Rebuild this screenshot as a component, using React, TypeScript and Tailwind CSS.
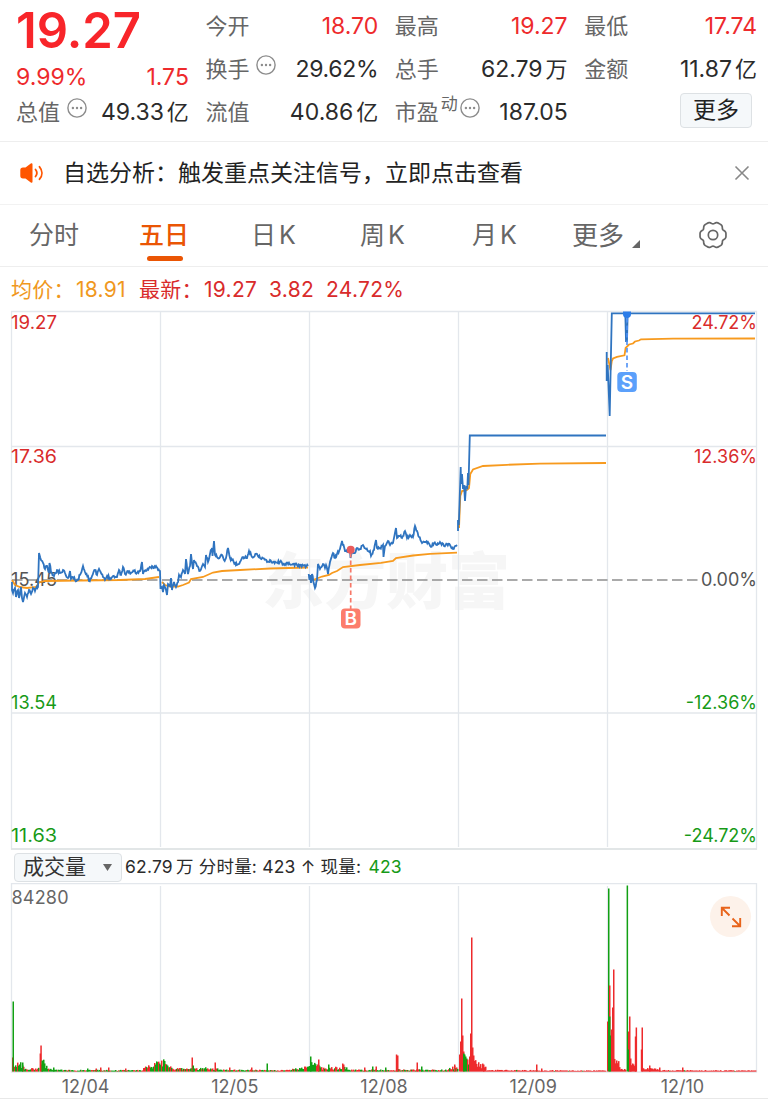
import React from "react";

type Point = [number, number];

const RED = "#ee2a2c";
const GREEN = "#11a013";

const random = (seed: number) => () => {
  seed = (seed * 16807) % 2147483647;
  return seed / 2147483647;
};

const parse = (raw: string): Point[] =>
  raw
    .trim()
    .split(/\s+/)
    .map((p) => p.split(",").map(Number) as Point);

// adds the minute-by-minute jitter between the key prices
const jitter = (points: Point[], amount: number, seed: number) => {
  const next = random(seed);
  const out: Point[] = [];
  points.forEach((p, i) => {
    out.push(p);
    const q = points[i + 1];
    if (!q || q[0] - p[0] < 1.4) return;
    const steps = Math.round((q[0] - p[0]) / 0.8);
    for (let s = 1; s < steps; s++) {
      const t = s / steps;
      out.push([
        p[0] + (q[0] - p[0]) * t,
        p[1] + (q[1] - p[1]) * t + (next() - 0.5) * amount,
      ]);
    }
  });
  return out;
};

const toPoints = (points: Point[]) =>
  points.map(([x, y]) => `${x.toFixed(1)},${y.toFixed(1)}`).join(" ");

const DAY1 =
  "12,582 12,590 13,593 15,588 16,597 18,590 19,598 21,587 22,598 23,602 25,593 27,597 29,590 31,594 33,588 35,591 36,588 38,587 39,553 41,560 43,563 45,569 47,566 49,573 49.5,563 51,572 54,576 57,570 60,573 63,570 65,573 68,578 70,571 71,579 73,577 75,580 78,580 80,575 83,566 85,572 88,576 89,581 92,576 95,570 97,575 99,569 101,573 103,577 105,580 107,576 110,578 113,576 117,577 119,570 121,575 123,567 125,574 128,571 131,573 134,571 137,573 140,571 142,562 143,574 146,571 149,568 152,566 154,568 156,566 158,570 160,571 160.5,588 162,587 163,592 164,585 166,590 167,595 168,584 170,586 171,578 172,590 174,582 176,587 178,582 179,575 181,577 183,570 185,574 186,559 188,574 190,566 191,554 193,569 194,560 197,566 200,571 203,564 205,567 206,555 208,562 210,554 212,548 212.5,556 214,541 215,555 217,557 220,557 222,555 224,560 226,558 228,548 230,558 232,560 235,563 237,565 240,562 243,557 247,558 249,551 252,557 257,554 260,558 263,558 267,562 270,560 273,562 280,562 285,564 297,565 308,566";
const DAY3 =
  "308.7,574 309.5,580 310,575 311,583 312,574 314,584 315,588 317,580 318,564 320,569 323,564 325,568 326,565 328,574 330,562 333,553 335,558 337,554 340,549 342,541 345,551 348,552 350,550 350.5,558 352,551 355,553 357,548 360,549 363,545 366,549 370,551 371,556 374,550 376,540 377,548 380,548 383,545 383.5,557 385,546 388,541 390,545 393,543 396,528 397,538 400,536 402,538 405,531 407,538 410,535 413,537 415,526 417,531 419,537 422,543 425,542 428,542 431,547 434,543 437,545 440,542 444,546 447,544 450,545 453,549 457,545";
const DAY4 =
  "458,531 458,520 458.8,525 460.7,467 461,484 462,474 463,489 464,485 465,501 466,487 467.3,488 468,473 468.5,485 469.8,435.5 606,435.5";
const DAY5 =
  "606.7,352 606.7,381 607.7,365 609.7,416 611.8,313.3 625.3,313.3 626,341 627,341 627.7,313.3 755,313.3";

const AVERAGES = [
  "12,580 15,585 20,587 27,588 36,587 39,582.5 45,581 80,580.5 120,580 145,579 159,577",
  "162,582 165,585 170,586.5 178,586.5 183,585 189,582.5 191,579 203,577 213,572.5 222,571 240,570 270,568.5 308,567.5",
  "309,577 313,580 317,578.5 322,576.5 329,575 332,573 337,571 343,567 360,565 381,562.8 393,561 396,558 413,555.5 430,553.8 457,552.7",
  "459,528 460.3,496 462,491 467,490 469,488 470.3,474 473,469.5 483,466 507,464.8 540,463.7 606,463",
  "608,358 610.5,370 611.8,361 613,358.5 617,356.8 624.5,355.3 625.6,348 629,344.5 633,343.5 635,341.5 639,340.5 641,339.3 673,338.6 755,338.5",
];

const PRICE_LINES = [
  toPoints(jitter(parse(DAY1), 3.2, 11)),
  toPoints(jitter(parse(DAY3), 2.8, 29)),
  toPoints(parse(DAY4)),
  toPoints(parse(DAY5)),
];

type Bar = { x: number; h: number; up: boolean };

// [from, to, start height, end height, share of rising bars]
const CLUSTERS: [number, number, number, number, number][] = [
  [14, 24, 12, 5, 0.3],
  [24, 39, 4, 3, 0.6],
  [41, 47, 17, 4, 0.1],
  [47, 60, 2.5, 1.5, 0.2],
  [60, 143, 1.6, 1.3, 0.4],
  [143, 162, 4, 11, 0.6],
  [162, 172, 11, 3, 0.2],
  [172, 204, 3, 3, 0.45],
  [204, 218, 4, 3, 0.5],
  [218, 290, 1.7, 1.5, 0.45],
  [290, 308, 2, 5, 0.35],
  [308, 320, 9, 6, 0.2],
  [320, 330, 4, 3, 0.5],
  [330, 347, 4, 4, 0.6],
  [347, 395, 1.7, 1.7, 0.4],
  [395, 445, 2, 1.7, 0.4],
  [445, 458, 2, 6, 0.3],
  [474, 486, 12, 4, 1],
  [486, 606, 1.5, 1, 0.95],
  [614, 620, 16, 6, 1],
  [620, 626, 2, 3, 1],
  [630, 636, 10, 3, 1],
  [642, 660, 4, 2, 1],
  [660, 756, 1.3, 1, 0.95],
];

const SPIKES: [number, number, number][] = [
  [12, 14, 1], [12.5, 70, 0], [22, 9, 0], [39.6, 18, 1], [40.3, 26, 1], [41.5, 11, 0],
  [53, 4, 0], [87, 3, 0], [95.500, 3, 1], [100, 4, 1], [108, 4, 1], [125, 3, 1],
  [191.5, 14, 1], [192.5, 6, 0], [214.5, 9, 1], [229, 4, 1], [251, 4, 1],
  [266.5, 8, 0], [310, 15, 0], [318, 12, 1], [328, 7, 0], [342, 8, 1],
  [343, 7, 1], [364, 4, 1], [372, 5, 0], [375.5, 5, 1], [385, 4, 0],
  [395.8, 17, 1], [397, 16, 1], [416.5, 9, 1], [421, 5, 0],
  [454, 7, 1], [459, 17, 1], [460, 30, 1], [461, 73, 1], [462, 36, 1],
  [463, 20, 1], [463, 18, 0], [464, 17, 0], [465, 15, 0], [466, 13, 0],
  [467, 12, 1], [468, 7, 0], [469, 15, 1], [470, 38, 1], [471, 134, 1],
  [472, 24, 1], [473, 16, 1], [483, 7, 1], [536, 7, 1], [541, 3, 1],
  [607, 50, 1], [608, 183, 0], [609, 86, 1], [609, 55, 0], [610, 36, 0],
  [611, 42, 1], [612, 64, 1], [613, 102, 1], [626.600, 186, 0], [628, 40, 1],
  [628, 22, 0], [629, 55, 1], [630, 13, 1], [634.8, 35, 1], [635.6, 44, 1],
  [640.8, 22, 1], [641.5, 44, 1], [649, 6, 1], [659, 4, 1], [682, 4, 1],
];

const volumeBars = (() => {
  const next = random(77);
  const bars: Bar[] = [];
  CLUSTERS.forEach(([from, to, h0, h1, share]) => {
    for (let x = from; x < to; x++) {
      const h = h0 + ((h1 - h0) * (x - from)) / (to - from);
      bars.push({ x, h: Math.max(0.5, h * (0.4 + next() * 0.8)), up: next() < share });
    }
  });
  SPIKES.forEach(([x, h, up]) => bars.push({ x, h, up: up === 1 }));
  return bars;
})();

const GEAR = Array.from({ length: 121 }, (_, i) => {
  const a = (i / 120) * Math.PI * 2;
  const r = 12.4 + 0.9 * Math.cos(6 * a) - 0.35 * Math.cos(12 * a);
  return `${(16 + r * Math.cos(a)).toFixed(2)},${(16 + r * Math.sin(a)).toFixed(2)}`;
}).join(" ");

const MoreDots = () => (
  <svg className="w-5 h-5 shrink-0" viewBox="0 0 20 20" fill="none">
    <circle cx="10" cy="10" r="9.1" stroke="#8c8c8c" strokeWidth="1.4" />
    <circle cx="5.9" cy="10" r="1.2" fill="#8c8c8c" />
    <circle cx="10" cy="10" r="1.2" fill="#8c8c8c" />
    <circle cx="14.1" cy="10" r="1.2" fill="#8c8c8c" />
  </svg>
);

const Stat = ({
  label,
  value,
  unit,
  red,
  sup,
  dots,
}: {
  label: string;
  value: string;
  unit?: string;
  red?: boolean;
  sup?: string;
  dots?: boolean;
}) => (
  <div className="flex h-[43px] items-center justify-between whitespace-nowrap">
    <div className="flex items-center">
      <span className="text-[22px] text-[#666]">{label}</span>
      {sup && <span className="mb-4 ml-0.5 text-[17px] text-[#666]">{sup}</span>}
      {dots && (
        <span className={sup ? "mb-2.5 ml-0.5" : "mb-2.5 ml-[7px]"}>
          <MoreDots />
        </span>
      )}
    </div>
    <div
      className={`-mr-px flex items-center text-[23px] ${red ? "text-[#ee2a2c]" : "text-[#2b2b2b]"}`}
    >
      <span className={value.endsWith("%") ? "tracking-[-0.3px]" : ""}>{value}</span>
      {unit && <span className="ml-[3px] text-[22px]">{unit}</span>}
    </div>
  </div>
);

const Quote = () => (
  <section className="grid h-[142px] grid-cols-4 gap-x-[17.5px] border-b border-[#eee] pt-[5px] pr-3 pl-4">
    <div>
      <div className="flex h-[51px] items-center text-[49px] font-semibold text-[#f8252a]">
        19.27
      </div>
      <div className="-mr-px flex h-[43px] items-center justify-between text-[23px] text-[#ee2a2c]">
        <span>9.99%</span>
        <span>1.75</span>
      </div>
      <div className="-mt-2">
        <Stat label="总值" value="49.33" unit="亿" dots />
      </div>
    </div>
    <div>
      <Stat label="今开" value="18.70" red />
      <Stat label="换手" value="29.62%" dots />
      <Stat label="流值" value="40.86" unit="亿" />
    </div>
    <div>
      <Stat label="最高" value="19.27" red />
      <Stat label="总手" value="62.79" unit="万" />
      <Stat label="市盈" sup="动" value="187.05" dots />
    </div>
    <div>
      <Stat label="最低" value="17.74" red />
      <Stat label="金额" value="11.87" unit="亿" />
      <div className="flex justify-end pt-[2px] pr-1">
        <button className="flex h-[35px] w-[72px] items-center justify-center rounded border border-[#dde1e4] bg-[#f5f8fa] text-[23px] text-[#222]">
          更多
        </button>
      </div>
    </div>
  </section>
);

const Notice = () => (
  <section className="flex h-[63px] items-center border-b border-[#f2f2f2] pr-[18px] pl-5">
    <svg className="h-6 w-6" viewBox="0 0 24 24" fill="none">
      <path
        d="M3 6.500H5.500l5.300-4c.9-.6 1.700-.3 1.700.7v17.600c0 1-.8 1.300-1.700.7l-5.300-4H3C1.200 17.500.3 16.600.3 14.800V9.200C.3 7.400 1.200 6.500 3 6.500z"
        fill="#ff5500"
      />
      <path
        d="M15.500 8.500c1.600 2 1.600 5 0 7M19.500 5.800c3.200 3.700 3.200 8.700 0 12.400"
        stroke="#ff5500"
        strokeWidth="1.8"
        strokeLinecap="round"
      />
    </svg>
    <span className="ml-[19px] flex-1 text-[23px] text-[#222]">
      自选分析：触发重点关注信号，立即点击查看
    </span>
    <svg className="h-4 w-4" viewBox="0 0 16 16" stroke="#888" strokeWidth="1.6">
      <path d="M1.500 1.500l13 13M14.500 1.500l-13 13" />
    </svg>
  </section>
);

const Tabs = () => (
  <nav className="flex h-[62px] border-b border-[#eee] pl-[29px] text-[25px] text-[#666]">
    <span className="w-[110px] pt-3">分时</span>
    <div className="w-[112px] pt-3 text-[#ea5504]">
      <span className="font-medium">五日</span>
      <div className="mt-[1px] ml-2 h-[5px] w-9 rounded-full bg-[#ea5504]" />
    </div>
    <span className="w-[109px] pt-3 [word-spacing:-4px]">日 K</span>
    <span className="w-[112px] pt-3 [word-spacing:-4px]">周 K</span>
    <span className="w-[100px] pt-3 [word-spacing:-4px]">月 K</span>
    <div className="flex w-[125px] pt-3">
      <span className="text-[26px] leading-[37px]">更多</span>
      <svg className="mt-[23px] ml-2 h-2 w-2" viewBox="0 0 8 8">
        <path d="M8 0v8H0z" fill="#666" />
      </svg>
    </div>
    <svg className="mt-3.5 h-8 w-8" viewBox="0 0 32 32" fill="none" stroke="#666">
      <polygon points={GEAR} strokeWidth="1.7" strokeLinejoin="round" />
      <circle cx="16" cy="16" r="4.700" strokeWidth="1.7" />
    </svg>
  </nav>
);

const axisLabels = [
  { y: 329, left: "19.27", right: "24.72%", color: "#d92b2b" },
  { y: 463, left: "17.36", right: "12.36%", color: "#d92b2b" },
  { y: 585.5, left: "15.45", right: "0.00%", color: "#555" },
  { y: 708.5, left: "13.54", right: "-12.36%", color: "#179a17" },
  { y: 842, left: "11.63", right: "-24.72%", color: "#179a17" },
];

const PriceChart = () => (
  <svg className="block h-[545px] w-full" viewBox="0 306 768 545">
    <text
      x="262"
      y="604"
      fontSize="61"
      fontWeight="900"
      fill="#f6f6f6"
      textLength="248"
      lengthAdjust="spacingAndGlyphs"
    >
      东方财富
    </text>
    <g stroke="#e3e7ec" strokeWidth="1.3" fill="none">
      <path d="M11.500 311.500H756.500V849H11.500z" />
      <path d="M11 446.500H757M11 713H757" />
      <path d="M160.500 312V847M309.500 312V847M458.500 312V847M607.500 312V847" />
    </g>
    <path d="M11 849H757" stroke="#dfe3e5" strokeWidth="1.5" />
    <path
      d="M12 580H700"
      stroke="#8e8e8e"
      strokeWidth="1.6"
      strokeDasharray="10.5 4.500"
    />
    {axisLabels.map((l) => (
      <g key={l.left} fill={l.color} fontSize="18">
        <text x="11" y={l.y} textLength="46" lengthAdjust="spacingAndGlyphs">
          {l.left}
        </text>
        <text x="757" y={l.y} textAnchor="end">
          {l.right}
        </text>
      </g>
    ))}
    <g fill="none" stroke="#f79a1e" strokeWidth="1.8">
      {AVERAGES.map((points) => (
        <polyline key={points} points={points} />
      ))}
    </g>
    <g fill="none" stroke="#2f74c0" strokeWidth="1.8">
      {PRICE_LINES.map((points) => (
        <polyline key={points} points={points} />
      ))}
    </g>

    <path d="M350.700 553V609" stroke="#f77869" strokeWidth="1.7" strokeDasharray="4.500 3" />
    <circle cx="350.700" cy="549.800" r="4" fill="#ea5b5b" />
    <rect x="341" y="608.500" width="19.500" height="20" rx="4" fill="#fc7d6c" />
    <text x="350.700" y="625" textAnchor="middle" fontSize="19" fontWeight="600" fill="#fff">
      B
    </text>

    <path d="M627 318V371" stroke="#4e90f5" strokeWidth="1.6" strokeDasharray="4.500 3" />
    <path d="M623 311.500h8v2.500a4 4 0 0 1-8 0z" fill="#2b7de9" />
    <rect x="617.300" y="372" width="19.500" height="20" rx="4" fill="#5ba0fb" />
    <text x="627" y="388.700" textAnchor="middle" fontSize="19" fontWeight="600" fill="#fff">
      S
    </text>
  </svg>
);

const VolumeBar = () => (
  <div className="flex h-[32px] items-center pl-3.5 text-[17.500px] whitespace-pre text-[#2b2b2b]">
    <button className="flex h-[29px] w-[108px] items-center justify-between rounded border border-[#dde1e4] bg-[#f5f8fa] pr-[9px] pl-2 text-[21px] text-[#333]">
      成交量
      <svg className="h-[7px] w-[9px]" viewBox="0 0 9 7">
        <path d="M0 0h9L4.500 7z" fill="#666" />
      </svg>
    </button>
    <span className="ml-[3px] tracking-[0.2px]">62.79</span>
    <span className="ml-[3px] tracking-[0.2px]">万 分时量: 423 ↑ 现量: </span>
    <span className="ml-0.5 tracking-[0.2px] text-[#179a17]">423</span>
  </div>
);

const VolumeChart = () => (
  <div className="relative">
    <svg className="block h-[191px] w-full" viewBox="0 883 768 191">
      <g stroke="#e3e7ec" strokeWidth="1.3" fill="none">
        <path d="M11.500 883.700H756.500V1072H11.500z" />
        <path d="M160.500 886V1071M309.500 886V1071M458.500 886V1071M607.500 886V1071" />
      </g>
      <text x="11.500" y="903.500" fontSize="18" fill="#666" textLength="57">
        84280
      </text>
      {volumeBars.map((b, i) => (
        <rect
          key={i}
          x={b.x}
          y={1071.5 - b.h}
          width="1.5"
          height={b.h}
          fill={b.up ? RED : GREEN}
        />
      ))}
    </svg>
    <div className="absolute top-[13px] right-[17px] flex h-[41px] w-[41px] items-center justify-center rounded-full bg-[#fdf2ea]">
      <svg className="h-[22px] w-[22px]" viewBox="0 0 22 22" fill="none" stroke="#e8641b" strokeWidth="1.9">
        <path d="M1.800 10V1.800H10M2 2l7.500 7.500M20.200 12v8.200H12M20 20l-7.500-7.500" />
      </svg>
    </div>
  </div>
);

const dates = ["12/04", "12/05", "12/08", "12/09", "12/10"];

export default function App() {
  return (
    <main className="h-[1104px] w-[768px] overflow-hidden bg-white font-['Inter','Noto_Sans_CJK_SC',sans-serif]">
      <Quote />
      <Notice />
      <Tabs />
      <div className="flex h-[39px] items-center pt-1.5 pl-[11px] text-[21px] tracking-[0.3px] whitespace-nowrap text-[#d92b2b]">
        <span className="w-32 text-[#f0981e]">
          均价：<span className="ml-px">18.91</span>
        </span>
        <span className="w-[130px]">
          最新：<span className="ml-px">19.27</span>
        </span>
        <span className="w-[57px]">3.82</span>
        <span>24.72%</span>
      </div>
      <PriceChart />
      <VolumeBar />
      <VolumeChart />
      <div className="mx-[11px] grid h-[24px] grid-cols-5 text-center text-[18px] leading-[25px] text-[#666]">
        {dates.map((date) => (
          <span key={date}>{date}</span>
        ))}
      </div>
      <div className="h-px bg-[#e8e8e8]" />
    </main>
  );
}
